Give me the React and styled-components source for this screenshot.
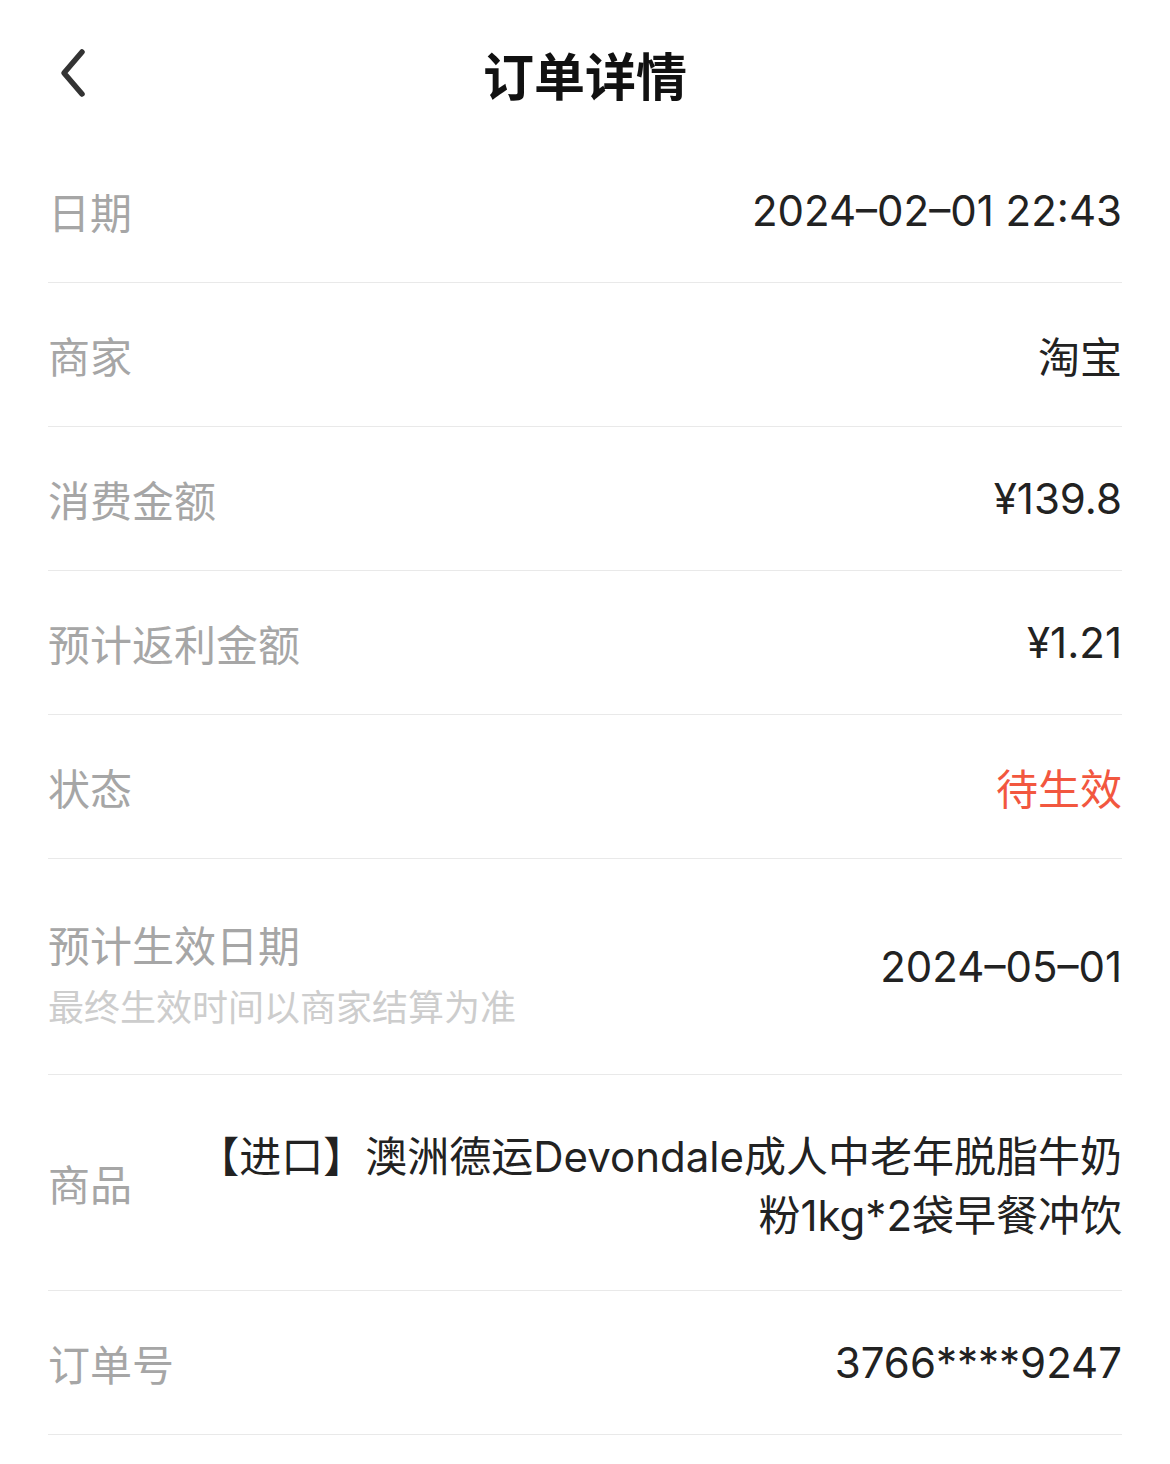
import React from "react";
import styled, { createGlobalStyle } from "styled-components";

const Global = createGlobalStyle`
  html, body { margin: 0; padding: 0; background: #fff; }
  body { font-family: Inter, "Noto Sans CJK SC", sans-serif; -webkit-font-smoothing: antialiased; }
`;

const Page = styled.div`
  width: 1170px;
  background: #fff;
`;

const Header = styled.header`
  position: relative;
  height: 130px;
  padding-top: 9px;
  display: flex;
  align-items: center;
  justify-content: center;
`;

const BackButton = styled.button`
  position: absolute;
  left: 48px;
  top: 40px;
  width: 50px;
  height: 66px;
  border: 0;
  padding: 0;
  background: transparent;
  display: flex;
  align-items: center;
  justify-content: center;
`;

const Title = styled.h1`
  margin: 0;
  font-family: "Noto Sans CJK SC", sans-serif;
  font-size: 51px;
  font-weight: 700;
  color: #111;
`;

const List = styled.div`
  padding: 0 48px;
`;

const Row = styled.div`
  display: flex;
  align-items: center;
  justify-content: space-between;
  min-height: ${(p) => p.$h || 143}px;
  border-bottom: 1px solid #e9e9e9;
  gap: 40px;
`;

const LabelBlock = styled.div`
  display: flex;
  flex-direction: column;
  flex-shrink: 0;
`;

const Label = styled.div`
  font-family: "Noto Sans CJK SC", sans-serif;
  font-size: 42px;
  line-height: ${(p) => p.$lh || 60}px;
  color: #a6a6a6;
  flex-shrink: 0;
`;

const Sub = styled.div`
  font-family: "Noto Sans CJK SC", sans-serif;
  font-size: 36px;
  line-height: 40px;
  margin-top: 6px;
  color: #cdcdcd;
`;

const Value = styled.div`
  font-size: 42px;
  line-height: 60px;
  color: ${(p) => (p.$accent ? "#f2573f" : "#222")};
  text-align: right;
  font-family: ${(p) => (p.$cjk ? `"Noto Sans CJK SC", sans-serif` : `Inter, "Noto Sans CJK SC", sans-serif`)};
`;

const Product = styled(Value)`
  font-family: Inter, "Noto Sans CJK SC", sans-serif;
  line-height: 59px;
  padding-top: 6px;
`;

function Chevron() {
  return (
    <svg width="30" height="50" viewBox="0 0 30 50" fill="none">
      <path d="M24 4 L6 25 L24 46" stroke="#333" strokeWidth="5.5" strokeLinecap="round" strokeLinejoin="round" />
    </svg>
  );
}

export default function App() {
  return (
    <Page>
      <Global />
      <Header>
        <BackButton aria-label="back">
          <Chevron />
        </BackButton>
        <Title>订单详情</Title>
      </Header>
      <List>
        <Row>
          <Label>日期</Label>
          <Value>2024–02–01 22:43</Value>
        </Row>
        <Row>
          <Label>商家</Label>
          <Value $cjk>淘宝</Value>
        </Row>
        <Row>
          <Label>消费金额</Label>
          <Value>¥139.8</Value>
        </Row>
        <Row>
          <Label>预计返利金额</Label>
          <Value>¥1.21</Value>
        </Row>
        <Row>
          <Label>状态</Label>
          <Value $cjk $accent>待生效</Value>
        </Row>
        <Row $h={215}>
          <LabelBlock>
            <Label $lh={70}>预计生效日期</Label>
            <Sub>最终生效时间以商家结算为准</Sub>
          </LabelBlock>
          <Value>2024–05–01</Value>
        </Row>
        <Row $h={215}>
          <Label>商品</Label>
          <Product>
            【进口】澳洲德运Devondale成人中老年脱脂牛奶
            <br />
            粉1kg*2袋早餐冲饮
          </Product>
        </Row>
        <Row>
          <Label>订单号</Label>
          <Value>3766****9247</Value>
        </Row>
      </List>
    </Page>
  );
}
